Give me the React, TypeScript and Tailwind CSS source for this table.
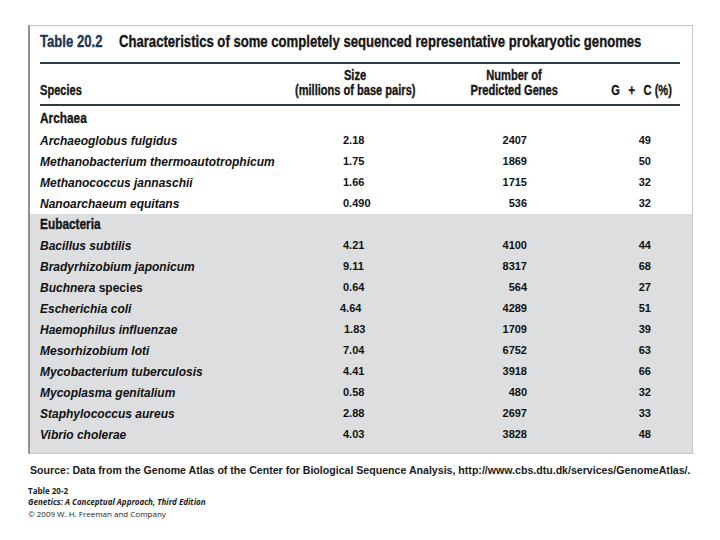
import React from "react";

const SANS = { fontFamily: '"Liberation Sans", Arial, sans-serif' };
const FOOT = { fontFamily: '"Open Sans", "Noto Sans", sans-serif' };

type Row = { species: string; plain?: string; size: string; genes: string; gc: string; shift?: number };

const ARCHAEA: Row[] = [
  { species: "Archaeoglobus fulgidus", size: "2.18", genes: "2407", gc: "49" },
  { species: "Methanobacterium thermoautotrophicum", size: "1.75", genes: "1869", gc: "50" },
  { species: "Methanococcus jannaschii", size: "1.66", genes: "1715", gc: "32" },
  { species: "Nanoarchaeum equitans", size: "0.490", genes: "536", gc: "32" },
];

const EUBACTERIA: Row[] = [
  { species: "Bacillus subtilis", size: "4.21", genes: "4100", gc: "44" },
  { species: "Bradyrhizobium japonicum", size: "9.11", genes: "8317", gc: "68" },
  { species: "Buchnera", plain: " species", size: "0.64", genes: "564", gc: "27" },
  { species: "Escherichia coli", size: "4.64", genes: "4289", gc: "51", shift: -3 },
  { species: "Haemophilus influenzae", size: "1.83", genes: "1709", gc: "39", shift: 1 },
  { species: "Mesorhizobium loti", size: "7.04", genes: "6752", gc: "63" },
  { species: "Mycobacterium tuberculosis", size: "4.41", genes: "3918", gc: "66" },
  { species: "Mycoplasma genitalium", size: "0.58", genes: "480", gc: "32" },
  { species: "Staphylococcus aureus", size: "2.88", genes: "2697", gc: "33" },
  { species: "Vibrio cholerae", size: "4.03", genes: "3828", gc: "48" },
];

// Helvetica Condensed stand-in: Arial-metric bold squeezed horizontally, stroked a touch heavier
function Cond({ children, origin = "origin-left" }: { children: React.ReactNode; origin?: string }) {
  return (
    <span className={`inline-block scale-x-[0.79] whitespace-nowrap [-webkit-text-stroke:0.35px_currentColor] ${origin}`}>
      {children}
    </span>
  );
}

function DataRow({ r }: { r: Row }) {
  return (
    <div className="flex h-[21px] items-center pl-[10px] font-bold text-[#111]" style={SANS}>
      <div className="w-[303px] whitespace-nowrap text-[12px]">
        <span className="italic">{r.species}</span>
        {r.plain}
      </div>
      <div className="w-[60px] text-[11px]" style={r.shift ? { marginLeft: r.shift, marginRight: -r.shift } : undefined}>
        {r.size}
      </div>
      <div className="w-[124px] text-right text-[11px]">{r.genes}</div>
      <div className="w-[124px] text-right text-[11px]">{r.gc}</div>
    </div>
  );
}

export default function App() {
  return (
    <div className="min-h-[540px] w-[720px] overflow-hidden bg-white pt-[25px]" style={SANS}>
      {/* table box */}
      <div className="ml-[28px] w-[665px] overflow-hidden border border-l-2 border-[#bcc6cc] border-l-[#8c9196]">
        <div className="flex h-[32px] items-center pl-[10px] text-[16.6px] font-bold">
          <span className="w-[80px] text-[#1d3657]">
            <Cond>Table 20.2</Cond>
          </span>
          <span className="text-[#161616]">
            <Cond>Characteristics of some completely sequenced representative prokaryotic genomes</Cond>
          </span>
        </div>
        <div className="ml-[10px] mr-[12px] mt-[4px] h-[2px] bg-[#2a3b4a]" />

        <div className="flex h-[40px] pl-[10px] pt-[4px] text-[14px] font-bold leading-[15px] text-[#161616]">
          <div className="flex w-[253px] items-end pb-[6px]">
            <Cond>Species</Cond>
          </div>
          <div className="flex w-[124px] flex-col items-center">
            <Cond origin="origin-center">Size</Cond>
            <Cond origin="origin-center">(millions of base pairs)</Cond>
          </div>
          <div className="w-[42px]" />
          <div className="flex w-[110px] flex-col items-center">
            <Cond origin="origin-center">Number of</Cond>
            <Cond origin="origin-center">Predicted Genes</Cond>
          </div>
          <div className="flex w-[103px] items-end justify-end pb-[6px]">
            <Cond origin="origin-right">
              G<span className="mx-[11px]">+</span>C (%)
            </Cond>
          </div>
        </div>
        <div className="ml-[10px] mr-[12px] h-[2px] bg-[#2a3b4a]" />

        <div className="flex h-[24px] items-center pl-[10px] text-[15px] font-bold text-[#161616]">
          <Cond>Archaea</Cond>
        </div>
        {ARCHAEA.map((r) => (
          <DataRow key={r.species} r={r} />
        ))}

        <div className="bg-[#dcdedf] pb-[8px]">
          <div className="flex h-[21px] items-center pl-[10px] text-[15px] font-bold text-[#161616]">
            <Cond>Eubacteria</Cond>
          </div>
          {EUBACTERIA.map((r) => (
            <DataRow key={r.species} r={r} />
          ))}
        </div>
      </div>

      <p className="ml-[30px] mt-[9px] whitespace-nowrap text-[10.6px] font-bold text-[#1a1a1a]">
        Source: Data from the Genome Atlas of the Center for Biological Sequence Analysis, http://www.cbs.dtu.dk/services/GenomeAtlas/.
      </p>

      <div className="ml-[28px] mt-[6px] text-[8px] leading-[11.5px] text-[#222]" style={FOOT}>
        <div className="font-bold">Table 20-2</div>
        <div className="font-bold italic">Genetics: A Conceptual Approach, Third Edition</div>
        <div>© 2009 W. H. Freeman and Company</div>
      </div>
    </div>
  );
}
